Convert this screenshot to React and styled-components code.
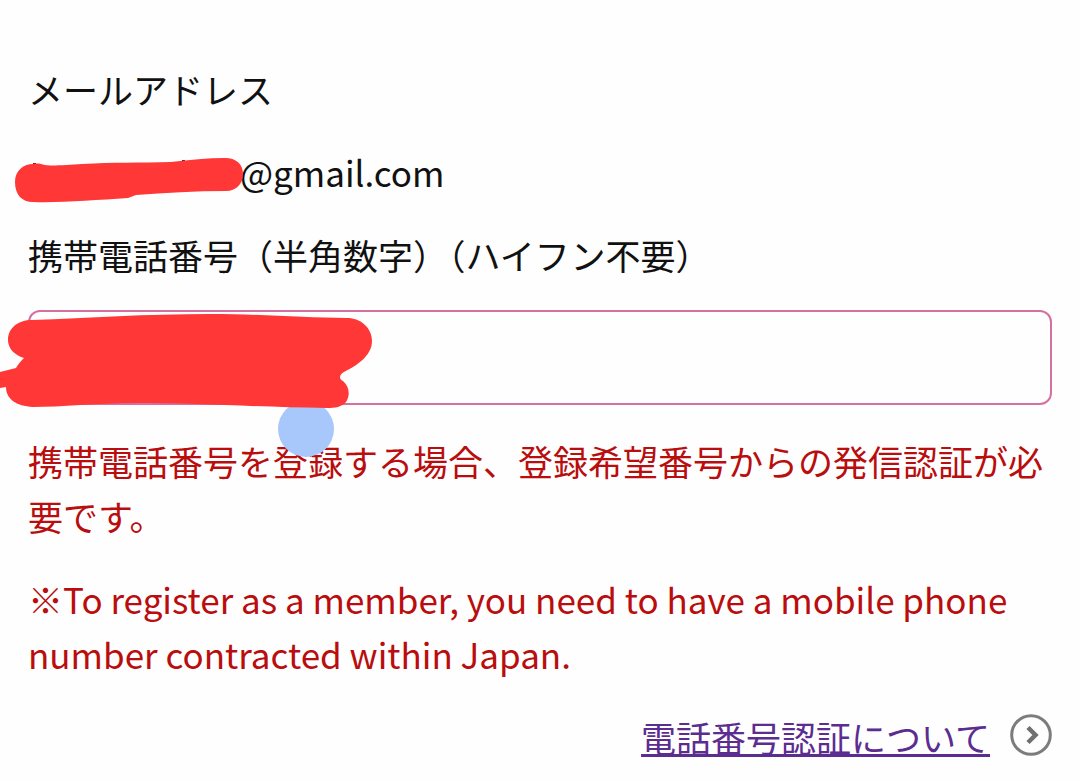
import React, { useState } from 'react'
import styled, { createGlobalStyle } from 'styled-components'

const GlobalStyle = createGlobalStyle`
  * {
    box-sizing: border-box;
  }

  body {
    margin: 0;
    background-color: #fefefe;
    color: #111;
    font-family: 'Noto Sans CJK JP', 'Noto Sans', sans-serif;
    font-size: 35px;
    line-height: 55px;
    overflow-x: hidden;
  }
`

const Form = styled.form`
  display: flex;
  flex-direction: column;
  gap: 28px;
  padding: 61px 28px 0;
`

const Text = styled.p`
  margin: 0;
  color: ${props => props.$alert ? '#b90d0e' : 'inherit'};
`

const Email = styled(Text)`
  display: flex;
`

const HiddenName = styled.span`
  position: relative;
  width: 212px;
`

const Scribble = styled.svg`
  position: absolute;
  top: 0;
  left: -28px;
  z-index: 2;
  overflow: visible;
  pointer-events: none;
`

const Field = styled.div`
  position: relative;
`

const PhoneInput = styled.input`
  display: block;
  width: 100%;
  height: 95px;
  padding: 0 24px;
  border: 2px solid #d6709f;
  border-radius: 12px;
  outline: 0;
  background-color: #fefefe;
  color: inherit;
  font: inherit;
`

const SelectionHandle = styled.span`
  position: absolute;
  top: 91px;
  left: 250px;
  z-index: 1;
  width: 56px;
  height: 56px;
  border-radius: 50%;
  background-color: #a8c7fa;
`

const LinkRow = styled.div`
  display: flex;
  justify-content: flex-end;
  align-items: center;
  gap: 20px;
`

const HelpLink = styled.a`
  color: #5c2d91;
  text-decoration: underline;
  text-decoration-thickness: 3px;
`

const Arrow = styled.svg`
  width: 42px;
  height: 42px;
  margin-bottom: 4px;
`

const ArrowIcon = () => (
  <Arrow viewBox="0 0 42 42" fill="none" aria-hidden="true">
    <circle cx="21" cy="21" r="19.3" stroke="#7c7c7c" strokeWidth="3" />
    <path d="M18 13.5 25.5 21 18 28.5" stroke="#707070" strokeWidth="4.5" />
  </Arrow>
)

export default function App() {
  const [phone, setPhone] = useState('')

  return (
    <>
      <GlobalStyle />
      <Form>
        <Text>メールアドレス</Text>
        <Email>
          <HiddenName>
            <Scribble width="244" height="55" viewBox="0 0 244 55" aria-hidden="true">
              <path d="M33 20h3M182 17h3" stroke="#5d1717" strokeWidth="2" />
              <path
                d="M33 20C23 20 15 27 15 38C15 51 22 58 33 58C60 59 95 56 128 54L136 51C165 49 195 47 226 47C236 47 243 40 243 30C243 20 236 14 225 14C207 14 190 16 171 18C140 19 113 18 82 20C68 21 50 22 45 21C41 20 38 19 33 20Z"
                fill="#ff3737"
              />
            </Scribble>
          </HiddenName>
          @gmail.com
        </Email>
        <Text as="label" htmlFor="phone">携帯電話番号（半角数字）（ハイフン不要）</Text>
        <Field>
          <PhoneInput id="phone" type="tel" value={phone} onChange={e => setPhone(e.target.value)} />
          <SelectionHandle />
          <Scribble width="372" height="98" viewBox="0 0 372 98" aria-hidden="true">
            <path
              d="M32 10C90 8 145 4 210 4C260 4 305 8 347 8C361 8 372 18 372 31C372 46 356 56 344 62C340 64 338 69 343 71C350 77 350 86 346 92C342 97 335 98 327 98C255 97 200 93 135 93C98 93 60 97 33 97C16 96 6 89 6 77L0 78V62L16 58C18 54 21 51 24 48C14 45 8 38 8 30C8 18 18 10 32 10Z"
              fill="#ff3737"
            />
          </Scribble>
        </Field>
        <Text $alert>携帯電話番号を登録する場合、登録希望番号からの発信認証が必要です。</Text>
        <Text $alert>※To register as a member, you need to have a mobile phone number contracted within Japan.</Text>
        <LinkRow>
          <HelpLink href="#">電話番号認証について</HelpLink>
          <ArrowIcon />
        </LinkRow>
      </Form>
    </>
  )
}
